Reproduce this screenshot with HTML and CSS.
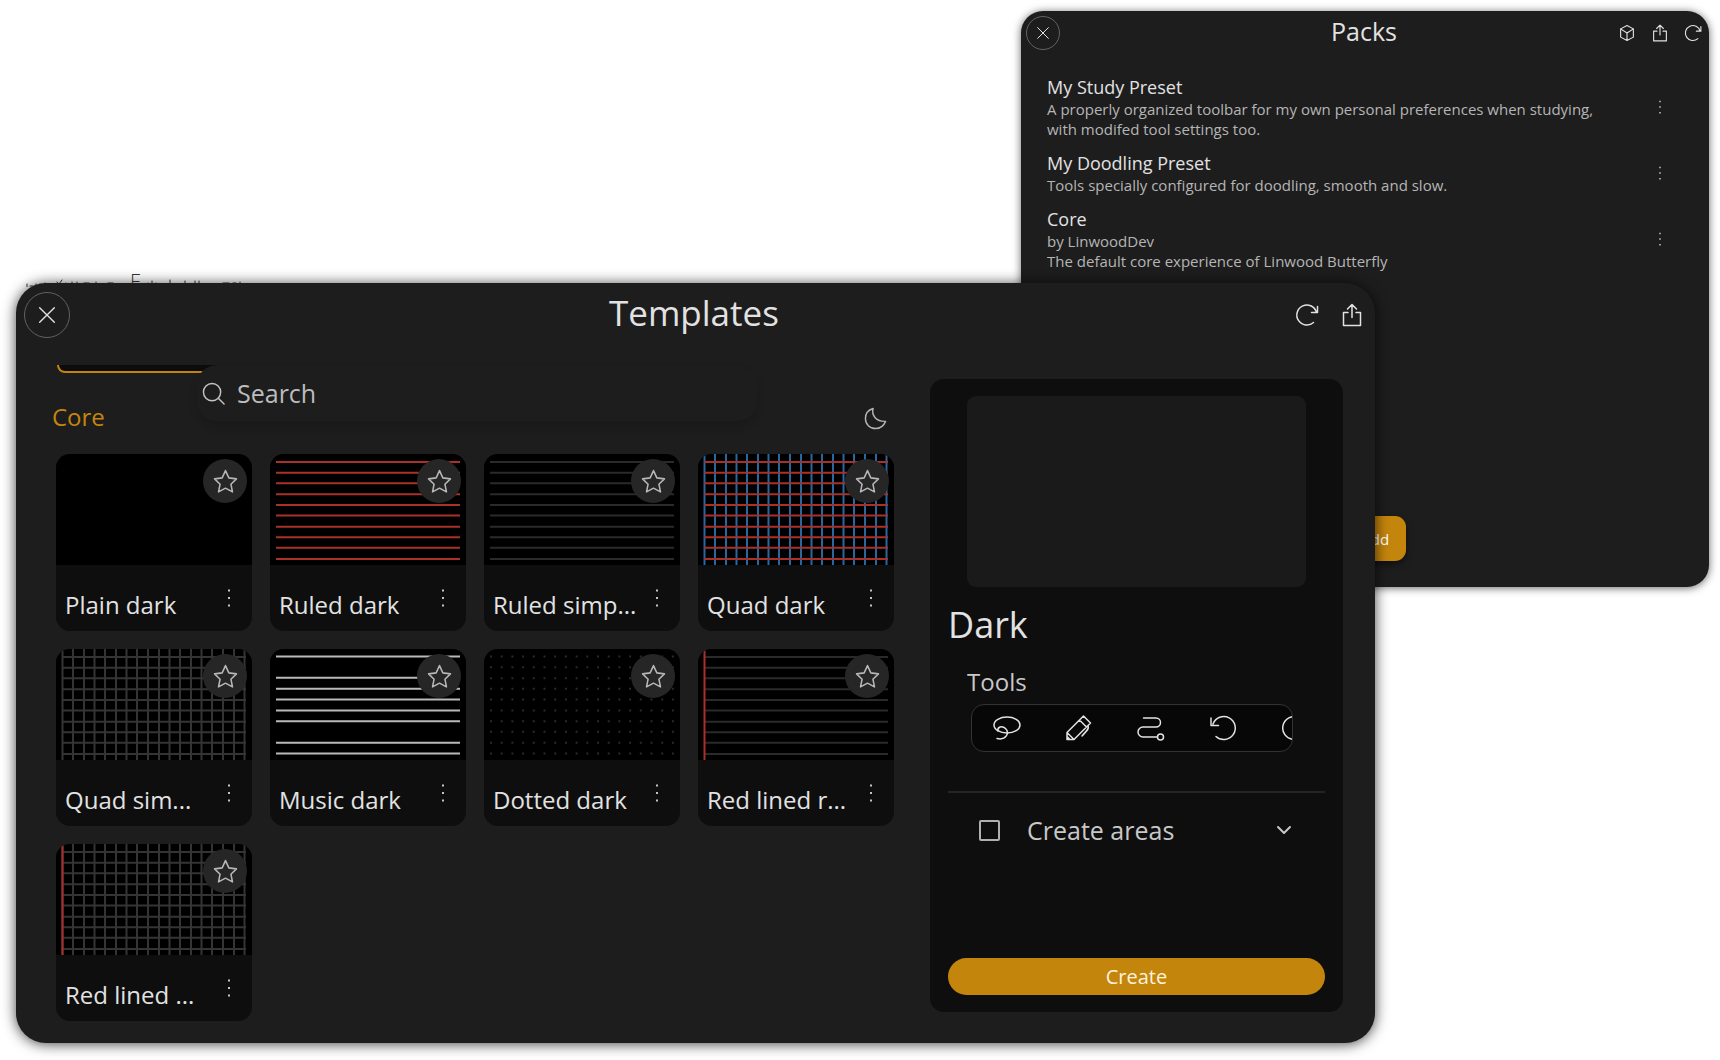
FILE: index.html
```html
<!DOCTYPE html>
<html lang="en">
<head>
<meta charset="utf-8">
<title>Templates and packs</title>
<link rel="stylesheet" href="styles.css">
</head>
<body>
<svg class="sprite" aria-hidden="true">
  <symbol id="close" viewBox="0 0 24 24"><path d="M4 4l16 16M20 4L4 20"/></symbol>
  <symbol id="refresh" viewBox="0 0 24 24"><path d="M18.500 19.500A10 10 0 1 1 21.500 9.500M22.500 3.500V9.500H16.500"/></symbol>
  <symbol id="share" viewBox="0 0 24 24"><path d="M8 9.500H3.500V22.500H20.500V9.500H16M12 14.500V1.500M7.500 6L12 1.500L16.500 6"/></symbol>
  <symbol id="cube" viewBox="0 0 24 24"><path d="M12 2L20.500 6.500V17.500L12 22L3.500 17.500V6.500ZM3.500 6.500L12 12L20.500 6.500M12 12V22"/></symbol>
  <symbol id="search" viewBox="0 0 24 24"><circle cx="10.500" cy="10.500" r="9"/><path d="M17 17l6 6"/></symbol>
  <symbol id="moon" viewBox="0 0 24 24"><path d="M9.500 1.500C7.500 9 13 15.500 22.500 15C20.500 20 16.500 22.500 12 22.500C6 22.500 1.500 18 1.500 12C1.500 7 4.500 3 9.500 1.500Z"/></symbol>
  <symbol id="star" viewBox="0 0 24 24"><path d="M12 1.500L15.200 8.500L22.500 9.500L17.200 14.600L18.700 22L12 18.400L5.300 22L6.800 14.600L1.500 9.500L8.800 8.500Z"/></symbol>
  <symbol id="dots" viewBox="0 0 8 24"><path class="solid" d="M3 3.500h2v2h-2zM3 11h2v2h-2zM3 18.500h2v2h-2z"/></symbol>
  <symbol id="lasso" viewBox="0 0 28 28"><ellipse cx="14" cy="11" rx="13" ry="8"/><path d="M5 17C4 13 9 11 12.500 14.500C17 19 13 26.500 4 24.500"/></symbol>
  <symbol id="pen" viewBox="0 0 28 28"><path d="M2 25.500V18.500L18.500 2L25.500 9L9 25.500ZM14.500 6L21.500 13M2 18.500L9 25.500M2 22.500L5 25.500M23 11.500C25 15 20.500 17.500 17 22"/></symbol>
  <symbol id="route" viewBox="0 0 28 28"><path d="M6.500 4H19a4.500 4.500 0 0 1 0 9H6a5 5 0 0 0 0 10H20"/><circle cx="23.500" cy="23" r="3"/></symbol>
  <symbol id="undo" viewBox="0 0 28 28"><path d="M7 22.500A11.500 11.500 0 1 0 4 10M2 4V11.500H9.500"/></symbol>
  <symbol id="redo" viewBox="0 0 28 28"><path d="M21 22.500A11.500 11.500 0 1 1 24 10M26 4V11.500H18.500"/></symbol>
  <symbol id="chevron" viewBox="0 0 16 16"><path d="M2 5l6 6l6-6"/></symbol>
  <symbol id="rows" viewBox="0 0 196 110" preserveAspectRatio="none"><path d="M6 8H190M6 18.500H190M6 29H190M6 40H190M6 50.500H190M6 61H190M6 72H190M6 82.500H190M6 93H190M6 104H190"/></symbol>
  <symbol id="cols" viewBox="0 0 196 110" preserveAspectRatio="none"><path d="M6.500 0V110M17 0V110M28 0V110M38.500 0V110M49 0V110M60 0V110M70.500 0V110M81 0V110M92 0V110M103 0V110M113.500 0V110M124 0V110M135 0V110M145.500 0V110M156 0V110M167 0V110M178 0V110M188.500 0V110"/></symbol>
  <symbol id="staff" viewBox="0 0 196 110" preserveAspectRatio="none"><path d="M6 7.500H190M6 28.500H190M6 39.500H190M6 50H190M6 61H190M6 71.500H190M6 93H190M6 103.500H190"/></symbol>
  <symbol id="points" viewBox="0 0 196 110" preserveAspectRatio="none"><path stroke-dasharray="2 8.700" d="M6 7.500H190M6 18H190M6 29H190M6 39.500H190M6 50H190M6 61H190M6 71.500H190M6 82H190M6 93H190M6 103.500H190"/></symbol>
  <symbol id="margin" viewBox="0 0 196 110" preserveAspectRatio="none"><path d="M6.500 0V110"/></symbol>
</svg>

<main class="desktop">
  <div class="notes" aria-hidden="true">
    <svg viewBox="0 0 100 8"><path d="M1 8V5M4 7h3M10 5v3M13 6h2M19 4v3M23 6h3M33 5l3-4M31 3l3 4M40 4v2M46 3v3M51 3v3M58 4h5M70 3v3M82 4h5"/></svg>
    <span>E</span>
    <svg viewBox="0 0 100 8"><path d="M3 4v4M7 2v6M11 4v4M25 1v7M40 2v6M50 2v6M54 2v6M78 4h6M88 4h3M95 3v5"/></svg>
  </div>

  <section class="window packs">
    <header class="bar">
      <button class="close" aria-label="Close packs"><svg><use href="#close"/></svg></button>
      <h2>Packs</h2>
      <div class="actions">
        <button aria-label="Core pack"><svg><use href="#cube"/></svg></button>
        <button aria-label="Export"><svg><use href="#share"/></svg></button>
        <button aria-label="Refresh"><svg><use href="#refresh"/></svg></button>
      </div>
    </header>
    <ul class="pack-list">
      <li>
        <div><h3>My Study Preset</h3><p>A properly organized toolbar for my own personal preferences when studying,<br>with modifed tool settings too.</p></div>
        <button class="more" aria-label="More"><svg><use href="#dots"/></svg></button>
      </li>
      <li>
        <div><h3>My Doodling Preset</h3><p>Tools specially configured for doodling, smooth and slow.</p></div>
        <button class="more" aria-label="More"><svg><use href="#dots"/></svg></button>
      </li>
      <li>
        <div><h3>Core</h3><p>by LinwoodDev<br>The default core experience of Linwood Butterfly</p></div>
        <button class="more" aria-label="More"><svg><use href="#dots"/></svg></button>
      </li>
    </ul>
    <button class="add">+ Add</button>
  </section>

  <section class="window templates">
    <header class="bar">
      <button class="close" aria-label="Close templates"><svg><use href="#close"/></svg></button>
      <h1>Templates</h1>
      <div class="actions">
        <button aria-label="Refresh"><svg><use href="#refresh"/></svg></button>
        <button aria-label="Export"><svg><use href="#share"/></svg></button>
      </div>
    </header>
    <div class="content">
      <div class="browser">
        <div class="top">
          <div class="tab"></div>
          <label class="search"><svg><use href="#search"/></svg><input type="text" placeholder="Search" aria-label="Search"></label>
          <h2>Core</h2>
          <button class="mode" aria-label="Dark mode"><svg><use href="#moon"/></svg></button>
        </div>
        <div class="cards">
          <article class="card"><div class="thumb"></div><button class="star" aria-label="Favorite"><svg><use href="#star"/></svg></button><footer><span>Plain dark</span><button class="more" aria-label="More"><svg><use href="#dots"/></svg></button></footer></article>
          <article class="card"><div class="thumb"><svg class="red"><use href="#rows"/></svg></div><button class="star" aria-label="Favorite"><svg><use href="#star"/></svg></button><footer><span>Ruled dark</span><button class="more" aria-label="More"><svg><use href="#dots"/></svg></button></footer></article>
          <article class="card"><div class="thumb"><svg class="dim"><use href="#rows"/></svg></div><button class="star" aria-label="Favorite"><svg><use href="#star"/></svg></button><footer><span>Ruled simp...</span><button class="more" aria-label="More"><svg><use href="#dots"/></svg></button></footer></article>
          <article class="card"><div class="thumb"><svg class="blue"><use href="#cols"/></svg><svg class="red"><use href="#rows"/></svg></div><button class="star" aria-label="Favorite"><svg><use href="#star"/></svg></button><footer><span>Quad dark</span><button class="more" aria-label="More"><svg><use href="#dots"/></svg></button></footer></article>
          <article class="card"><div class="thumb"><svg class="gray"><use href="#cols"/></svg><svg class="gray"><use href="#rows"/></svg></div><button class="star" aria-label="Favorite"><svg><use href="#star"/></svg></button><footer><span>Quad sim...</span><button class="more" aria-label="More"><svg><use href="#dots"/></svg></button></footer></article>
          <article class="card"><div class="thumb"><svg class="white"><use href="#staff"/></svg></div><button class="star" aria-label="Favorite"><svg><use href="#star"/></svg></button><footer><span>Music dark</span><button class="more" aria-label="More"><svg><use href="#dots"/></svg></button></footer></article>
          <article class="card"><div class="thumb"><svg class="dim"><use href="#points"/></svg></div><button class="star" aria-label="Favorite"><svg><use href="#star"/></svg></button><footer><span>Dotted dark</span><button class="more" aria-label="More"><svg><use href="#dots"/></svg></button></footer></article>
          <article class="card"><div class="thumb"><svg class="dim"><use href="#rows"/></svg><svg class="red"><use href="#margin"/></svg></div><button class="star" aria-label="Favorite"><svg><use href="#star"/></svg></button><footer><span>Red lined r...</span><button class="more" aria-label="More"><svg><use href="#dots"/></svg></button></footer></article>
          <article class="card"><div class="thumb"><svg class="gray"><use href="#cols"/></svg><svg class="gray"><use href="#rows"/></svg><svg class="red"><use href="#margin"/></svg></div><button class="star" aria-label="Favorite"><svg><use href="#star"/></svg></button><footer><span>Red lined ...</span><button class="more" aria-label="More"><svg><use href="#dots"/></svg></button></footer></article>
        </div>
      </div>
      <aside class="details">
        <div class="preview"></div>
        <h2>Dark</h2>
        <h3>Tools</h3>
        <div class="tools">
          <button aria-label="Lasso"><svg><use href="#lasso"/></svg></button>
          <button aria-label="Pen"><svg><use href="#pen"/></svg></button>
          <button aria-label="Path eraser"><svg><use href="#route"/></svg></button>
          <button aria-label="Undo"><svg><use href="#undo"/></svg></button>
          <button aria-label="Redo"><svg><use href="#redo"/></svg></button>
        </div>
        <div class="areas">
          <label><input type="checkbox">Create areas</label>
          <button aria-label="Expand areas"><svg><use href="#chevron"/></svg></button>
        </div>
        <button class="create">Create</button>
      </aside>
    </div>
  </section>
</main>
</body>
</html>
```
FILE: styles.css
```css
* { box-sizing: border-box; }
body { margin: 0; background: #fff; color: #e2e2e2; font-family: "Open Sans", "Noto Sans", sans-serif; }
h1, h2, h3, p, ul { margin: 0; padding: 0; font-weight: 400; }
button { border: 0; padding: 0; background: none; color: inherit; font: inherit; display: grid; place-items: center; }
svg { display: block; fill: none; stroke: currentColor; stroke-width: 1.500; stroke-linejoin: round; stroke-linecap: round; }
.sprite { position: absolute; width: 0; height: 0; }
.solid { fill: currentColor; stroke: none; }

.desktop { display: grid; min-height: 100vh; align-items: start; overflow: hidden; }
.window { grid-area: 1 / 1; background: #1d1d1d; }

.notes { grid-area: 1 / 1; display: flex; gap: 4px; margin: 271px 0 0 26px; color: #333; font-size: 20px; line-height: 22px; font-weight: 300; }
.notes svg { width: 100px; height: 8px; margin-top: 8px; stroke-width: 1; }

.bar { display: grid; grid-template-columns: 1fr auto 1fr; align-items: center; }
.close { border: 1px solid #626262; border-radius: 50%; }
.actions { display: flex; justify-content: flex-end; }

/* Packs window */
.packs { display: flex; flex-direction: column; justify-self: end; width: 40%; min-height: 576px; margin: 11px 11px 0 0; padding: 5px 7px 26px 5px; border-radius: 22px; box-shadow: 0 1px 8px rgba(0, 0, 0, .6); }
.packs .bar h2 { font-size: 25px; line-height: 30px; padding-bottom: 4px; }
.packs .close { width: 34px; height: 34px; }
.packs .close svg { width: 16px; height: 16px; }
.packs .actions { gap: 15px; }
.packs .actions svg { width: 18px; height: 18px; }
.pack-list { display: flex; flex-direction: column; flex: 1; gap: 12px; margin: 25px 38px 0 21px; list-style: none; }
.pack-list li { display: flex; justify-content: space-between; align-items: center; }
.pack-list h3 { font-size: 18px; line-height: 24px; }
.pack-list p { color: #b5b5b5; font-size: 15px; line-height: 20px; white-space: nowrap; }
.more { color: #c4c4c4; }
.more svg { width: 8px; height: 24px; }
.pack-list .more svg { height: 18px; }
.add { align-self: center; width: 84px; height: 45px; padding-left: 10px; border-radius: 11px; background: #c4850d; color: #fff; font-size: 15px; box-shadow: 0 3px 6px rgba(0, 0, 0, .5); }

/* Templates window */
.templates { width: 79%; margin: 283px 0 16px 16px; border-radius: 30px; box-shadow: 0 1px 14px rgba(0, 0, 0, .75); }
.templates .bar { padding: 9px 11px 0 8px; }
.templates .bar h1 { font-size: 35px; line-height: 42px; padding-bottom: 4px; }
.templates .close { width: 46px; height: 46px; }
.templates .close svg { width: 22px; height: 22px; }
.templates .actions { gap: 21px; }
.templates .actions svg { width: 24px; height: 24px; }
.content { display: grid; grid-template-columns: minmax(0, 67fr) minmax(0, 33fr); gap: 36px; padding: 27px 32px 22px 40px; }

.top { display: grid; grid-template-columns: 141px minmax(0, 560px) 1fr; height: 89px; }
.top > * { grid-row: 1; }
.tab { grid-column: 1 / 3; width: 200px; height: 8px; margin-left: 1px; background: #0c0c0c; border: solid #c4850d; border-width: 0 0 2px 2px; border-bottom-left-radius: 12px; }
.search { grid-column: 2; display: flex; align-items: center; gap: 12px; height: 56px; padding: 0 5px; border-radius: 20px; background: #1d1d1d; color: #c4c4c4; box-shadow: 0 6px 8px rgba(0, 0, 0, .14); }
.search svg { width: 23px; height: 23px; }
.search input { flex: 1; min-width: 0; border: 0; padding: 0; background: none; color: inherit; font: 25px/32px "Open Sans", sans-serif; }
.search input::placeholder { color: #bcbcbc; opacity: 1; }
.top h2 { grid-column: 1; align-self: start; margin: 36px 0 0 -4px; color: #c4850d; font-size: 24px; line-height: 32px; }
.mode { grid-column: 3; justify-self: end; align-self: start; margin: 42px 7px 0 0; color: #b4b4b4; }
.mode svg { width: 23px; height: 23px; }

.cards { display: grid; grid-template-columns: repeat(4, minmax(0, 1fr)); gap: 18px; }
.card { position: relative; overflow: hidden; border-radius: 14px; background: #0e0e0e; }
.thumb { display: grid; height: 111px; background: #000; }
.thumb svg { grid-area: 1 / 1; width: 100%; height: 100%; stroke-linecap: butt; stroke-width: 2; }
.red { color: #a93128; }
.blue { color: #2569a3; }
.gray { color: #343434; }
.dim { color: #2a2a2a; }
.white { color: #b9b9b9; }
.star { position: absolute; top: 5px; right: 5px; width: 44px; height: 44px; border-radius: 50%; background: #262626; color: #b6b6b6; }
.star svg { width: 25px; height: 25px; }
.card footer { display: flex; justify-content: space-between; height: 66px; padding: 21px 19px 0 9px; font-size: 24px; line-height: 38px; white-space: nowrap; }
.card .more { height: 24px; }

.details { display: flex; flex-direction: column; margin: 14px 0 9px; padding: 17px 18px; border-radius: 14px; background: #0e0e0e; }
.preview { height: 191px; margin: 0 19px; border-radius: 9px; background: #1a1a1a; }
.details h2 { margin-top: 15px; font-size: 36px; line-height: 46px; }
.details h3 { margin: 18px 19px 6px; color: #c8c8c8; font-size: 24px; line-height: 32px; }
.tools { display: flex; gap: 44px; height: 48px; margin: 0 32px 0 23px; padding-left: 21px; border: 1px solid #333; border-radius: 13px; background: #070707; overflow: hidden; }
.tools button { flex: none; }
.tools svg { width: 28px; height: 28px; }
.areas { display: flex; align-items: center; justify-content: space-between; margin-top: 39px; padding: 20px 33px 0 31px; border-top: 2px solid #242424; color: #c8c8c8; }
.areas label { display: flex; align-items: center; gap: 27px; font-size: 25px; line-height: 34px; }
.areas input { appearance: none; width: 21px; height: 21px; margin: 0; border: 2px solid #b0b0b0; border-radius: 2px; }
.areas svg { width: 16px; height: 16px; stroke-width: 2; }
.create { height: 37px; margin-top: auto; border-radius: 19px; background: #c4850d; color: #fff3dc; font-size: 20px; }
```
